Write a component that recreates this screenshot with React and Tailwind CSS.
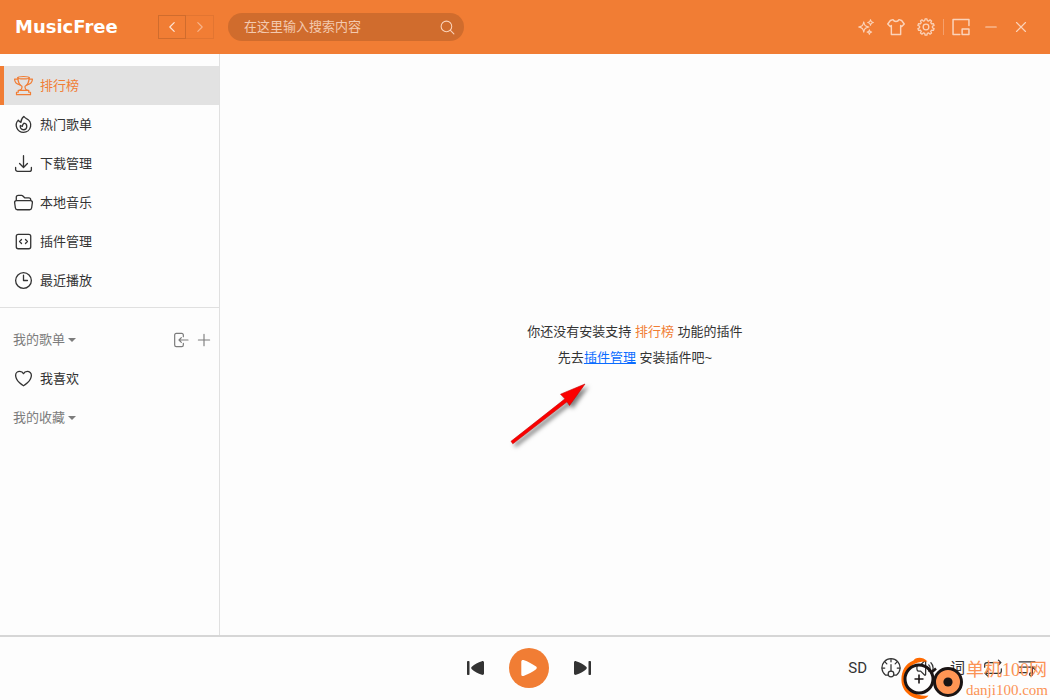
import {
  HiOutlineArrowDownTray,
  HiOutlineChevronLeft,
  HiOutlineChevronRight,
  HiOutlineClock,
  HiOutlineCodeBracketSquare,
  HiOutlineFire,
  HiOutlineFolderOpen,
  HiOutlineHeart,
  HiOutlineMagnifyingGlass,
  HiOutlineMinus,
  HiOutlinePlus,
  HiOutlineSparkles,
  HiOutlineSpeakerWave,
  HiOutlineXMark,
} from 'react-icons/hi2'

const Svg = ({ className, children, strokeWidth = 1.5 }) => (
  <svg
    viewBox="0 0 24 24"
    className={className}
    fill="none"
    stroke="currentColor"
    strokeWidth={strokeWidth}
    strokeLinecap="round"
    strokeLinejoin="round"
    aria-hidden="true"
  >
    {children}
  </svg>
)

const TrophyIcon = ({ className }) => (
  <Svg className={className} strokeWidth={1.4}>
    <ellipse cx="12" cy="3" rx="6.500" ry="1.300" />
    <path d="M5.500 3c.2 5.500 1.500 8.200 4.700 9.800v1.700c0 1.400-.9 2.300-2.700 3M18.500 3c-.2 5.500-1.500 8.200-4.700 9.800v1.700c0 1.400.9 2.300 2.700 3" />
    <path d="M5.600 4.600H1.800c0 3.400 1.700 5.800 6.100 6.700M18.400 4.600h3.800c0 3.400-1.700 5.800-6.100 6.700" />
    <path d="M6 17.500h12v2.200h2v2.800H4v-2.800h2Z" />
  </Svg>
)

const ShirtIcon = ({ className }) => (
  <Svg className={className} strokeWidth={1.9}>
    <path d="M8 2.200 4.500 3.300 1 8l3.300 3.300L5.800 10v12h12.400V10l1.500 1.300L23 8l-3.500-4.700L16 2.200c-.8 1.600-2.300 2.400-4 2.400s-3.200-.8-4-2.400Z" />
  </Svg>
)

const TEETH = 10

// each tooth: foot, tip, tip, foot
const gearPoints = Array.from({ length: TEETH * 4 }, (_, i) => {
  const tooth = Math.floor(i / 4)
  const offset = [-0.32, -0.18, 0.18, 0.32][i % 4]
  const radius = i % 4 === 0 || i % 4 === 3 ? 8.6 : 11
  const angle = ((tooth + offset) / TEETH) * Math.PI * 2 - Math.PI / 2
  return `${12 + radius * Math.cos(angle)},${12 + radius * Math.sin(angle)}`
}).join(' ')

const GearIcon = ({ className }) => (
  <Svg className={className} strokeWidth={1.700}>
    <polygon points={gearPoints} />
    <circle cx="12" cy="12" r="3.800" />
  </Svg>
)

const MiniModeIcon = ({ className }) => (
  <Svg className={className} strokeWidth={2}>
    <path d="M22.600 10V2H1.400v20h9" />
    <rect x="13.500" y="14.500" width="9.100" height="7.500" />
  </Svg>
)

const ImportIcon = ({ className }) => (
  <Svg className={className} strokeWidth={1.800}>
    <path d="M15.500 7V4.500c0-1.400-1-2.500-2.400-2.500H4.900C3.500 2 2.500 3.100 2.500 4.500v15c0 1.400 1 2.500 2.400 2.500h8.200c1.400 0 2.400-1.100 2.400-2.500V17" />
    <path d="M22.500 12H9M12.500 8.500 9 12l3.500 3.500" />
  </Svg>
)

const GaugeIcon = ({ className }) => (
  <Svg className={className}>
    <path d="M8.400 20.600H5.600A10.900 10.900 0 1 1 18.400 20.600h-2.800" />
    <path d="M12 15.500V8M12 1.500v3M1.500 12h3M19.500 12h3M5 5l2 2M19 5l-2 2" />
    <circle cx="12" cy="19.200" r="3.400" />
  </Svg>
)

const RepeatIcon = ({ className }) => (
  <Svg className={className}>
    <path d="M2 11V8.500C2 6.600 3.300 5.500 5 5.500h16.500M18.500 2.500l3 3-3 3" />
    <path d="M22 13v2.500c0 1.900-1.300 3-3 3H2.500M5.500 21.500l-3-3 3-3" />
  </Svg>
)

const PlaylistIcon = ({ className }) => (
  <Svg className={className}>
    <path d="M2.500 4.500h19M2.500 11h19M2.500 17.500h10" />
    <path d="M18.500 20V11M21.500 13.500l-3-2.500" />
    <circle cx="16.800" cy="19.500" r="1.800" />
  </Svg>
)

const SkipIcon = ({ className }) => (
  <svg viewBox="0 0 20 20" className={className} fill="currentColor" aria-hidden="true">
    <rect x="15.500" y="3" width="2.500" height="14" rx="0.800" />
    <path d="M1 4.500c0-1.100 1.100-1.700 2.100-1.300 3.900 1.300 7.300 3.100 10.100 5.600.8.700.8 1.700 0 2.400-2.800 2.500-6.200 4.300-10.100 5.600-1 .4-2.100-.2-2.100-1.300Z" />
  </svg>
)

const PlayIcon = ({ className }) => (
  <svg viewBox="0 0 20 20" className={className} fill="currentColor" aria-hidden="true">
    <path d="M2.300 3.500c0-1.200 1.100-1.900 2.200-1.500 4.700 1.700 9 3.900 12.600 6.600.9.700.9 2 0 2.700-3.600 2.700-7.900 4.900-12.600 6.600-1.100.4-2.200-.3-2.200-1.500Z" />
  </svg>
)

const menus = [
  { name: '排行榜', icon: TrophyIcon, active: true },
  { name: '热门歌单', icon: HiOutlineFire },
  { name: '下载管理', icon: HiOutlineArrowDownTray },
  { name: '本地音乐', icon: HiOutlineFolderOpen },
  { name: '插件管理', icon: HiOutlineCodeBracketSquare },
  { name: '最近播放', icon: HiOutlineClock },
]

const IconButton = ({ label, icon: Icon }) => (
  <button type="button" aria-label={label} className="flex shrink-0">
    <Icon className="size-[18px]" />
  </button>
)

const Header = () => (
  <header className="flex h-[54px] shrink-0 items-center bg-[#f17d34] pr-5 pl-[15px] text-[#fbd3ba]">
    <h1 className="w-[143px] shrink-0 font-['DejaVu_Sans'] text-lg font-bold text-white">MusicFree</h1>
    <div className="flex shrink-0">
      <button
        type="button"
        aria-label="后退"
        className="flex h-6 w-7 items-center justify-center border border-[#d06c2d] text-[#fde6d8]"
      >
        <HiOutlineChevronLeft className="size-3.5 stroke-2" />
      </button>
      <button
        type="button"
        aria-label="前进"
        disabled
        className="flex h-6 w-7 items-center justify-center border border-l-0 border-[#e27531] text-[#f7b48b]"
      >
        <HiOutlineChevronRight className="size-3.5 stroke-2" />
      </button>
    </div>
    <form role="search" className="ml-3.5 flex h-7 w-[236px] items-center rounded-full bg-[#d06c2d] pr-2 pl-4">
      <input
        type="text"
        aria-label="搜索"
        placeholder="在这里输入搜索内容"
        className="min-w-0 flex-1 bg-transparent outline-none placeholder:text-[#f3c9af]"
      />
      <button type="button" aria-label="搜索" className="flex">
        <HiOutlineMagnifyingGlass className="size-[17px]" />
      </button>
    </form>
    <div className="ml-auto flex items-center gap-3">
      <IconButton label="新功能" icon={HiOutlineSparkles} />
      <IconButton label="主题" icon={ShirtIcon} />
      <IconButton label="设置" icon={GearIcon} />
    </div>
    <span className="mx-2 h-4 w-px bg-[#f5a06c]" />
    <div className="flex items-center gap-3">
      <IconButton label="迷你模式" icon={MiniModeIcon} />
      <IconButton label="最小化" icon={HiOutlineMinus} />
      <IconButton label="关闭" icon={HiOutlineXMark} />
    </div>
  </header>
)

const SectionTitle = ({ children, actions }) => (
  <div className="flex h-[39px] items-center pr-1.5 pl-[13px] text-[#7c7c7c]">
    <button type="button" className="flex items-center gap-[3px]">
      {children}
      <svg viewBox="0 0 8 4" className="h-1 w-2" fill="currentColor" aria-hidden="true">
        <path d="M0 0h8L4 4Z" />
      </svg>
    </button>
    {actions}
  </div>
)

const Sidebar = () => (
  <aside className="w-[220px] shrink-0 border-r border-[#e0e0e0] pt-3">
    <nav>
      {menus.map(({ name, icon: Icon, active }) => (
        <a
          key={name}
          href="#"
          className={
            active
              ? 'flex h-[39px] items-center gap-1.5 border-l-4 border-[#f17d34] bg-[#e2e2e2] pl-[9px] text-[#f17d34]'
              : 'flex h-[39px] items-center gap-1.5 border-l-4 border-transparent pl-[9px]'
          }
        >
          <Icon className="size-[21px]" />
          {name}
        </a>
      ))}
    </nav>
    <div className="mt-[7px] border-t border-[#e0e0e0] pt-3">
      <SectionTitle
        actions={
          <div className="ml-auto flex items-center gap-1.5">
            <button type="button" aria-label="导入歌单" className="flex">
              <ImportIcon className="size-4" />
            </button>
            <button type="button" aria-label="新建歌单" className="flex">
              <HiOutlinePlus className="size-[18px]" />
            </button>
          </div>
        }
      >
        我的歌单
      </SectionTitle>
      <a href="#" className="flex h-[39px] items-center gap-1.5 pl-[13px]">
        <HiOutlineHeart className="size-[21px]" />
        我喜欢
      </a>
      <SectionTitle>我的收藏</SectionTitle>
    </div>
  </aside>
)

const Main = () => (
  <main className="flex min-w-0 flex-1 items-center justify-center">
    <div className="relative text-center leading-[26px]">
      <p>
        你还没有安装支持 <span className="text-[#f17d34]">排行榜</span> 功能的插件
      </p>
      <p>
        先去
        <a href="#" className="text-[#0a6cff] underline">
          插件管理
        </a>{' '}
        安装插件吧~
      </p>
      {/* pointer to the plugin link */}
      <svg
        viewBox="0 0 90 72"
        className="absolute top-full left-1/2 -ml-[130px] mt-2 h-[72px] w-[90px] drop-shadow-[3px_3px_2px_rgba(0,0,0,0.5)]"
        aria-hidden="true"
      >
        <path
          d="M6 62.300 60 19.800 55.500 15.200 80 5 64.500 26.500 62 22.800 7.800 64.800Z"
          fill="#fb0000"
          stroke="#c80000"
          strokeWidth="0.600"
        />
      </svg>
    </div>
  </main>
)

const Watermark = () => (
  <div className="pointer-events-none absolute right-0 bottom-0 flex items-end pr-[2px] text-[#fb9355]">
    <svg viewBox="0 0 66 44" className="h-11 w-[66px]" fill="none" aria-hidden="true">
      <path
        d="M27.500 5.500C22-.5 14.500 2 13.500 4.500 4 8 1 17 1.500 25 2 36 13 43.500 22 43c3 0 5-1.500 6.500-3.500C17 41 5.500 34 5 23.500 4.500 13 13 5 27.500 5.500Z"
        fill="#ff6a00"
      />
      <circle cx="19" cy="23" r="14" stroke="#1a1414" strokeWidth="3" />
      <path d="M19 18.500v9M14.500 23h9" stroke="#1a1414" strokeWidth="1.600" />
      <circle cx="48" cy="26" r="13.500" fill="#ff9554" stroke="#1a1414" strokeWidth="3" />
      <circle cx="48" cy="26" r="4.600" fill="#1a1414" />
      <path d="m32 16 4-3.500" stroke="#1a1414" strokeWidth="2.500" />
    </svg>
    <div className="font-['Liberation_Serif','Noto_Sans_CJK_SC',serif]">
      <p className="text-lg leading-5">单机100网</p>
      <p className="text-[15px] leading-5">danji100.com</p>
    </div>
  </div>
)

const Player = () => (
  <footer className="relative grid h-[65px] shrink-0 grid-cols-[1fr_auto_1fr] items-center border-t-2 border-[#d6d6d6] pr-[13px] pb-0.5 pl-[21px]">
    <div />
    <div className="flex items-center gap-3.5">
      <button type="button" aria-label="上一首" className="flex size-10 items-center justify-center">
        <SkipIcon className="size-5 rotate-180" />
      </button>
      <button
        type="button"
        aria-label="播放"
        className="flex size-10 items-center justify-center rounded-full bg-[#f17d34] text-white"
      >
        <PlayIcon className="size-5" />
      </button>
      <button type="button" aria-label="下一首" className="flex size-10 items-center justify-center">
        <SkipIcon className="size-5" />
      </button>
    </div>
    <div className="flex items-center justify-end gap-3.5">
      <button type="button" className="font-['Roboto'] text-[15px] leading-5">
        SD
      </button>
      <button type="button" aria-label="倍速" className="flex">
        <GaugeIcon className="size-5" />
      </button>
      <button type="button" aria-label="音量" className="flex">
        <HiOutlineSpeakerWave className="size-5" />
      </button>
      <button type="button" aria-label="歌词" className="w-5 pl-px text-left text-[15px] leading-5">
        词
      </button>
      <button type="button" aria-label="循环模式" className="flex">
        <RepeatIcon className="size-5" />
      </button>
      <button type="button" aria-label="播放列表" className="flex">
        <PlaylistIcon className="size-5" />
      </button>
    </div>
    <Watermark />
  </footer>
)

const App = () => {
  return (
    <div className="flex min-h-screen flex-col bg-[#fdfdfd] font-['Liberation_Sans','Noto_Sans_CJK_SC',sans-serif] text-[13px] text-[#333]">
      <Header />
      <div className="flex flex-1">
        <Sidebar />
        <Main />
      </div>
      <Player />
    </div>
  )
}

export default App
